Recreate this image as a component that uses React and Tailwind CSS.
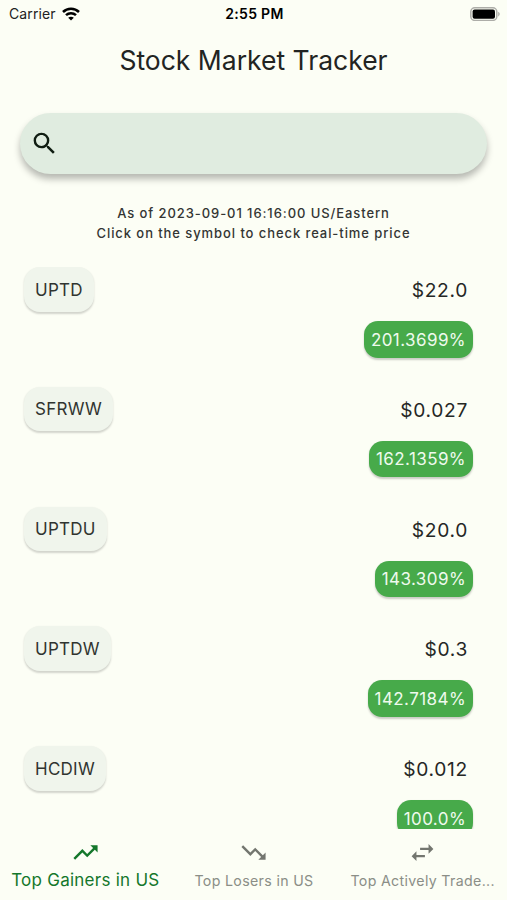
import React, { useState } from 'react';
import { MdSearch, MdTrendingUp, MdTrendingDown, MdSwapHoriz } from 'react-icons/md';

const STOCKS = [
    { symbol: 'UPTD', price: '$22.0', change: '201.3699%' },
    { symbol: 'SFRWW', price: '$0.027', change: '162.1359%' },
    { symbol: 'UPTDU', price: '$20.0', change: '143.309%' },
    { symbol: 'UPTDW', price: '$0.3', change: '142.7184%' },
    { symbol: 'HCDIW', price: '$0.012', change: '100.0%' },
];

const TABS = [
    { label: 'Top Gainers in US', icon: MdTrendingUp },
    { label: 'Top Losers in US', icon: MdTrendingDown },
    { label: 'Top Actively Trade...', icon: MdSwapHoriz },
];

const StatusBar = () => (
    <div className="grid grid-cols-3 items-center h-[27px] pl-[9px] pr-[7px] text-black">
        <div className="flex items-center gap-[6px]">
            <span className="text-[14px] leading-none tracking-[0.1px] text-[#222]">Carrier</span>
            <svg width="18" height="14" viewBox="0 0 18 14" fill="none" stroke="currentColor" strokeWidth="2.5">
                <path d="M1 5C5.4 0.6 12.6 0.6 17 5" />
                <path d="M4 8.2C6.8 5.5 11.2 5.5 14 8.2" />
                <path d="M9 13.6L6.2 10.8C7.7 9.3 10.3 9.3 11.8 10.8Z" fill="currentColor" stroke="none" />
            </svg>
        </div>
        <span className="text-center text-[14px] font-semibold leading-none tracking-[0.3px] whitespace-nowrap">2:55 PM</span>
        <svg className="justify-self-end" width="30" height="14" viewBox="0 0 30 14">
            <rect x="0.8" y="0.8" width="26" height="12.6" rx="4" fill="none" stroke="#adada8" strokeWidth="1.5" />
            <rect x="2.6" y="2.5" width="22.4" height="9.2" rx="2" fill="#000" />
            <path d="M28.2 4.8c2 .9 2 3.7 0 4.6z" fill="#adada8" />
        </svg>
    </div>
);

const StockRow = ({ stock }) => (
    <div className="flex shrink-0 justify-between items-start h-[119.75px]">
        <button className="h-[44.5px] px-[11px] pt-[2px] rounded-[16px] bg-[#f0f5ec] shadow-[0_1.5px_2px_rgba(0,0,0,0.17)] text-[17px] tracking-[0.25px] text-[#303430]">{stock.symbol}</button>
        <div className="flex flex-col items-end">
            <span className="h-[54px] pt-[9px] pr-[5px] text-[19.2px] leading-[28px] tracking-[0.7px] text-[#252725]">{stock.price}</span>
            <span className="flex items-center h-[36.5px] pt-[2px] px-[7px] rounded-[14px] bg-[#47aa4a] shadow-[0_1.5px_2px_rgba(0,0,0,0.2)] text-[17px] tracking-[0.42px] text-[#effaee]">{stock.change}</span>
        </div>
    </div>
);

const App = () => {
    const [activeTab, setActiveTab] = useState(0);

    return (
        <div className="flex flex-col w-[507px] h-[900px] overflow-hidden bg-[#fcfef5] font-['Inter',sans-serif]">
            <StatusBar />
            <h1 className="h-[86px] pt-[15px] text-center text-[26.5px] leading-[36px] text-[#222422]">Stock Market Tracker</h1>
            <div className="flex shrink-0 items-center h-[61px] mx-[20px] pl-[10px] rounded-full bg-[#e0ece0] shadow-[0_5px_7px_rgba(0,0,0,0.28)]">
                <MdSearch size={29} className="text-[#101d12]" />
            </div>
            <div className="shrink-0 h-[93px] pt-[30px] text-center text-[13px] leading-[19.5px] font-medium tracking-[0.92px] text-[#333533]">
                <p>As of 2023-09-01 16:16:00 US/Eastern</p>
                <p>Click on the symbol to check real-time price</p>
            </div>
            <div className="flex flex-col flex-1 min-h-0 overflow-hidden pl-[24px] pr-[34px]">
                {STOCKS.map(stock => <StockRow key={stock.symbol} stock={stock} />)}
            </div>
            <nav className="grid grid-cols-3 shrink-0 h-[71px] pl-px">
                {TABS.map((tab, i) => (
                    <button key={tab.label} onClick={() => setActiveTab(i)} className={`flex flex-col items-center pt-[9px] whitespace-nowrap ${i === activeTab ? 'text-[#14772b]' : 'text-[#73766f]'}`}>
                        <tab.icon size={29} />
                        <span className={i === activeTab ? 'text-[17px] leading-[26px] tracking-[0.25px]' : 'text-[14.2px] leading-[28px] tracking-[0.33px] text-[#8b8e87]'}>{tab.label}</span>
                    </button>
                ))}
            </nav>
        </div>
    );
};

export default App;
